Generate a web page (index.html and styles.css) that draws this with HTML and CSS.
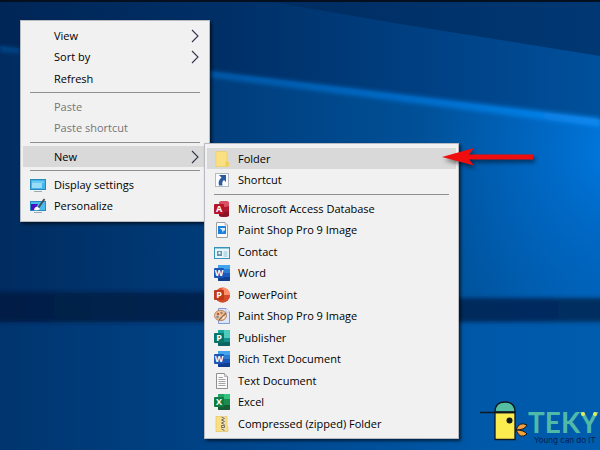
FILE: index.html
```
<!DOCTYPE html>
<html lang="en">
<head>
    <meta charset="UTF-8">
    <meta name="viewport" content="width=device-width, initial-scale=1.0">
    <title>Desktop</title>
    <link rel="stylesheet" href="styles.css">
</head>
<body>
    <!-- wallpaper -->
    <svg class="wallpaper" viewBox="0 0 600 450" preserveAspectRatio="none" aria-hidden="true">
        <defs>
            <linearGradient id="base" x1="0" x2="1" y1="0" y2="0">
                <stop offset="0" stop-color="#002c60"/>
                <stop offset="0.35" stop-color="#003c7a"/>
                <stop offset="0.75" stop-color="#00539c"/>
                <stop offset="1" stop-color="#0062b8"/>
            </linearGradient>
            <radialGradient id="glow" gradientUnits="userSpaceOnUse" cx="620" cy="150" r="200">
                <stop offset="0" stop-color="#007ae2"/>
                <stop offset="0.4" stop-color="#006ccc" stop-opacity="0.7"/>
                <stop offset="1" stop-color="#0060b8" stop-opacity="0"/>
            </radialGradient>
            <linearGradient id="sky" x1="0" x2="1" y1="0" y2="0">
                <stop offset="0" stop-color="#002656"/>
                <stop offset="0.4" stop-color="#003068"/>
                <stop offset="1" stop-color="#00509c"/>
            </linearGradient>
            <linearGradient id="corner" x1="0" x2="1" y1="0" y2="0">
                <stop offset="0" stop-color="#002c60"/>
                <stop offset="1" stop-color="#003874"/>
            </linearGradient>
            <linearGradient id="beam" x1="0" x2="1" y1="0" y2="0">
                <stop offset="0" stop-color="#0058a8"/>
                <stop offset="0.6" stop-color="#0070d0"/>
                <stop offset="1" stop-color="#0a88f0"/>
            </linearGradient>
            <linearGradient id="floor" x1="0" x2="1" y1="0" y2="0">
                <stop offset="0" stop-color="#00356e"/>
                <stop offset="0.4" stop-color="#00458a"/>
                <stop offset="0.8" stop-color="#0058a8"/>
                <stop offset="1" stop-color="#005cae"/>
            </linearGradient>
            <linearGradient id="band" x1="0" x2="1" y1="0" y2="0">
                <stop offset="0" stop-color="#001e46"/>
                <stop offset="1" stop-color="#002e62"/>
            </linearGradient>
            <filter id="soft" x="-10%" y="-50%" width="120%" height="200%"><feGaussianBlur stdDeviation="2"/></filter>
        </defs>
        <rect width="600" height="450" fill="url(#base)"/>
        <rect width="600" height="300" fill="url(#glow)"/>
        <path d="M0 0H600V120L210 71L0 46Z" fill="url(#sky)"/>
        <path d="M260 0H600V56L400 24Z" fill="url(#corner)"/>
        <path d="M0 46L20 49V53L0 51Z" fill="#004a90" filter="url(#soft)"/>
        <path d="M200 70L600 118V127L200 76Z" fill="url(#beam)" filter="url(#soft)"/>
        <rect y="322" width="600" height="128" fill="url(#floor)"/>
        <path d="M-10 292H300V298H610V322H-10Z" fill="url(#band)" filter="url(#soft)"/>
        <rect width="600" height="2" fill="#04101f"/>
    </svg>

    <!-- icons -->
    <svg class="sprite" aria-hidden="true">
        <defs>
            <symbol id="i-chevron" viewBox="0 0 8 14"><path d="M1 1L7 7L1 13" fill="none" stroke="#33334c" stroke-width="1.1"/></symbol>
            <symbol id="i-display" viewBox="0 0 16 16">
                <rect x="0.5" y="2.5" width="15" height="10" fill="#45b4ea" stroke="#2789bd"/>
                <path d="M2 6H12V11H2Z" fill="#9adcf8"/><path d="M2 4H14V6H2Z" fill="#6cc9f2"/>
                <path d="M4 14.5H12" stroke="#9caab4"/>
            </symbol>
            <symbol id="i-personalize" viewBox="0 0 16 16">
                <rect x="0.5" y="3.5" width="15" height="9" fill="#4bbbed" stroke="#2789bd"/>
                <path d="M1 6H8L5 12H1Z" fill="#4a12c4"/><path d="M4 12Q5 8 8 9L10 11Q8 13 4 12Z" fill="#fff"/>
                <path d="M8.500 9.500L14.500 1" stroke="#46515a" stroke-width="2"/>
                <path d="M4 14.500H12" stroke="#9caab4"/>
            </symbol>
            <symbol id="i-folder" viewBox="0 0 16 16">
                <path d="M2 0.500H12L13 1.500V10L14.500 11V15.500H2Z" fill="#fbe083" stroke="#ecc95c" stroke-width="0.6"/>
                <path d="M11.500 15.500V11L12.500 10L14.500 11.500V15.500Z" fill="#f0cf58"/>
            </symbol>
            <symbol id="i-shortcut" viewBox="0 0 16 16">
                <rect x="1.500" y="1.500" width="13" height="13" fill="#fbfcfd" stroke="#b3bac2"/>
                <path d="M5 3H12V10L10 8Q7.500 9.500 8.500 13.500H5Q3.500 9 7.500 5.500Z" fill="#2c5c9e"/>
            </symbol>
            <symbol id="i-access" viewBox="0 0 16 16">
                <path d="M5 1Q10 -1 15 1V15Q10 17 5 15Z" fill="#b01a30"/><path d="M5 1Q10 -1 15 1V5Q10 7 5 5Z" fill="#db5063"/><path d="M5 10Q10 12 15 10V15Q10 17 5 15Z" fill="#8c1226"/>
                <rect y="3" width="10" height="10" rx="1" fill="#b5152b"/><text class="glyph" x="5" y="11">A</text>
            </symbol>
            <symbol id="i-image" viewBox="0 0 16 16">
                <path d="M2.500 0.500H11L13.500 3V15.500H2.500Z" fill="#fafafa" stroke="#9a9fa5"/><path d="M11 0.500V3H13.500" fill="#ddd" stroke="#9a9fa5" stroke-width="0.6"/>
                <rect x="4" y="4" width="8" height="8" fill="#1b7fdb"/><path d="M5.500 6H11V8.500H9.500L9 11L8 8Z" fill="#e2f3ff"/>
            </symbol>
            <symbol id="i-contact" viewBox="0 0 16 16">
                <rect x="0.500" y="3.500" width="15" height="11" fill="#e9f7fc" stroke="#3793b9"/><path d="M1 4.500H15" stroke="#8ecbe2"/>
                <rect x="3" y="7" width="5" height="5" fill="#6394aa"/><circle cx="5.500" cy="9" r="1.200" fill="#e9f7fc"/>
                <path d="M9.500 8H13.500M9.500 10H13.500M9.500 12H13.500" stroke="#77b8d2" stroke-width="0.8"/>
            </symbol>
            <symbol id="i-word" viewBox="0 0 16 16">
                <rect x="4" width="12" height="16" rx="1" fill="#185abd"/><path d="M4 1Q4 0 5 0H15Q16 0 16 1V4H4Z" fill="#41a5ee"/><path d="M4 4H16V8H4Z" fill="#2b7cd3"/><path d="M4 12H16V15Q16 16 15 16H5Q4 16 4 15Z" fill="#103f91"/>
                <rect y="3" width="10" height="10" rx="1" fill="#1c55b4"/><text class="glyph" x="5" y="11">W</text>
            </symbol>
            <symbol id="i-powerpoint" viewBox="0 0 16 16">
                <circle cx="8.500" cy="8" r="7.500" fill="#e65a38"/><path d="M8.500 0.500A7.500 7.500 0 0 1 16 8H8.500Z" fill="#ff8f6b"/><path d="M1 8H16A7.500 7.500 0 0 1 1 8Z" fill="#d24a28"/>
                <rect y="3" width="10" height="10" rx="1" fill="#c0391b"/><text class="glyph" x="5" y="11">P</text>
            </symbol>
            <symbol id="i-palette" viewBox="0 0 16 16">
                <path d="M4.500 0.500H12L15.500 4V15.500H4.500Z" fill="#dce6fb" stroke="#7f9bd6"/><path d="M12 0.500V4H15.500" fill="#fff" stroke="#7f9bd6" stroke-width="0.6"/>
                <ellipse cx="6.500" cy="7.500" rx="6" ry="5.200" fill="#efc49c" stroke="#a8714c" stroke-width="0.8"/>
                <circle cx="4" cy="6" r="1.300" fill="#b8583c"/><circle cx="7.500" cy="5" r="1.200" fill="#a87a4c"/><circle cx="3.500" cy="9" r="1.200" fill="#6c88b8"/><circle cx="9" cy="9" r="1.500" fill="#fff"/>
                <path d="M5 12L12 5" stroke="#96603c" stroke-width="1.200"/>
            </symbol>
            <symbol id="i-publisher" viewBox="0 0 16 16">
                <rect x="4" width="12" height="16" rx="1" fill="#12908b"/><path d="M4 1Q4 0 5 0H10V8H4Z" fill="#18a79f"/><path d="M10 0H15Q16 0 16 1V8H10Z" fill="#4cccbc"/><path d="M4 12H16V15Q16 16 15 16H5Q4 16 4 15Z" fill="#0a645f"/>
                <rect y="3" width="10" height="10" rx="1" fill="#077568"/><text class="glyph" x="5" y="11">P</text>
            </symbol>
            <symbol id="i-text" viewBox="0 0 16 16">
                <path d="M2.500 0.500H10.500L13.500 3.500V15.500H2.500Z" fill="#fafafa" stroke="#8f8f8f"/><path d="M10.500 0.500V3.500H13.500" fill="#ddd" stroke="#8f8f8f" stroke-width="0.6"/>
                <path d="M4.500 4.500H9M4.500 6.500H11.500M4.500 8.500H11.500M4.500 10.500H11.500M4.500 12.500H11.500" stroke="#9b9b9b" stroke-width="0.9"/>
            </symbol>
            <symbol id="i-excel" viewBox="0 0 16 16">
                <rect x="4" width="12" height="16" rx="1" fill="#1d8a4f"/><path d="M10 0H15Q16 0 16 1V5H10Z" fill="#33c481"/><path d="M4 1Q4 0 5 0H10V5H4Z" fill="#21a366"/><path d="M4 11H16V15Q16 16 15 16H5Q4 16 4 15Z" fill="#185c37"/>
                <rect y="3" width="10" height="10" rx="1" fill="#107c41"/><text class="glyph" x="5" y="11">X</text>
            </symbol>
            <symbol id="i-zip" viewBox="0 0 16 16">
                <path d="M2 0.500H13V10L14 11V15.500H2Z" fill="#fbe083" stroke="#e0bf58" stroke-width="0.6"/>
                <path d="M9 0.500V15" stroke="#e9dfc0" stroke-width="4"/>
                <path d="M7.500 1L10.500 2.500L7.500 4L10.500 5.500L7.500 7L10.500 8.500M7.500 9.500H10.500V11.500H7.500ZM7.500 13L10.500 14.500" fill="none" stroke="#77705a"/>
            </symbol>
        </defs>
    </svg>

    <nav class="menu context-menu" aria-label="Desktop">
        <ul class="group">
            <li><button class="item"><span class="label">View</span><svg class="chevron"><use href="#i-chevron"/></svg></button></li>
            <li><button class="item"><span class="label">Sort by</span><svg class="chevron"><use href="#i-chevron"/></svg></button></li>
            <li><button class="item"><span class="label">Refresh</span></button></li>
        </ul>
        <hr>
        <ul class="group">
            <li><button class="item" disabled><span class="label">Paste</span></button></li>
            <li><button class="item" disabled><span class="label">Paste shortcut</span></button></li>
        </ul>
        <hr>
        <ul class="group">
            <li><button class="item active" aria-haspopup="true" aria-expanded="true"><span class="label">New</span><svg class="chevron"><use href="#i-chevron"/></svg></button></li>
        </ul>
        <hr>
        <ul class="group">
            <li><button class="item"><svg class="icon"><use href="#i-display"/></svg><span class="label">Display settings</span></button></li>
            <li><button class="item"><svg class="icon"><use href="#i-personalize"/></svg><span class="label">Personalize</span></button></li>
        </ul>
    </nav>

    <nav class="menu submenu" aria-label="New">
        <ul class="group">
            <li><button class="item active"><svg class="icon"><use href="#i-folder"/></svg><span class="label">Folder</span></button></li>
            <li><button class="item"><svg class="icon"><use href="#i-shortcut"/></svg><span class="label">Shortcut</span></button></li>
        </ul>
        <hr>
        <ul class="group">
            <li><button class="item"><svg class="icon"><use href="#i-access"/></svg><span class="label">Microsoft Access Database</span></button></li>
            <li><button class="item"><svg class="icon"><use href="#i-image"/></svg><span class="label">Paint Shop Pro 9 Image</span></button></li>
            <li><button class="item"><svg class="icon"><use href="#i-contact"/></svg><span class="label">Contact</span></button></li>
            <li><button class="item"><svg class="icon"><use href="#i-word"/></svg><span class="label">Word</span></button></li>
            <li><button class="item"><svg class="icon"><use href="#i-powerpoint"/></svg><span class="label">PowerPoint</span></button></li>
            <li><button class="item"><svg class="icon"><use href="#i-palette"/></svg><span class="label">Paint Shop Pro 9 Image</span></button></li>
            <li><button class="item"><svg class="icon"><use href="#i-publisher"/></svg><span class="label">Publisher</span></button></li>
            <li><button class="item"><svg class="icon"><use href="#i-word"/></svg><span class="label">Rich Text Document</span></button></li>
            <li><button class="item"><svg class="icon"><use href="#i-text"/></svg><span class="label">Text Document</span></button></li>
            <li><button class="item"><svg class="icon"><use href="#i-excel"/></svg><span class="label">Excel</span></button></li>
            <li><button class="item"><svg class="icon"><use href="#i-zip"/></svg><span class="label">Compressed (zipped) Folder</span></button></li>
        </ul>
    </nav>

    <svg class="arrow" viewBox="0 0 92 20" aria-hidden="true">
        <path d="M0 10L32 1L27 7.500H91V12.500H27L32 18.500Z" fill="#f00d0d"/>
    </svg>

    <div class="brand">
        <svg class="bird" viewBox="0 0 48 40" aria-hidden="true">
            <path d="M15 11Q15 1 25 1Q35 1 35 11Z" fill="#55bfa2" stroke="#101820" stroke-width="1.300"/>
            <path d="M15 11.500H35V38.500H15Z" fill="#fbec50" stroke="#101820" stroke-width="1.300"/>
            <path d="M0 11.500H35" stroke="#101820" stroke-width="1.500"/>
            <circle cx="29.500" cy="19.500" r="3" fill="#101820"/>
            <path d="M36 29Q39 20 47 24Q45 29 36 29Z" fill="#f5a03c" stroke="#101820"/>
            <path d="M36 29Q44 29 47 33Q40 39 36 29Z" fill="#f5a03c" stroke="#101820"/>
        </svg>
        <div class="wordmark">
            <strong class="name">TEKY</strong>
            <span class="tagline">Young can do IT</span>
        </div>
    </div>
</body>
</html>
```
FILE: styles.css
```
* {
    box-sizing: border-box;
}
body {
    margin: 0;
    min-height: 100vh;
    position: relative;
    overflow: hidden;
    background-color: #00458a;
    font-family: "Open Sans", "Noto Sans", sans-serif;
    font-size: 11px;
}
.wallpaper {
    position: absolute;
    width: 100%;
    height: 100%;
}
.sprite {
    position: absolute;
    width: 0;
    height: 0;
}
.glyph {
    font: bold 9px "Open Sans", sans-serif;
    fill: white;
    text-anchor: middle;
}

/* menus */
.menu {
    position: absolute;
    padding: 4px 2px;
    background-color: #f1f1f1;
    border: 1px solid #b8bcc2;
    box-shadow: 2px 2px 3px rgba(0, 0, 0, 0.6);
}
.context-menu {
    left: 20px;
    top: 20px;
    width: 190px;
}
.submenu {
    left: 204px;
    top: 143px;
    width: 255px;
}
.group {
    display: grid;
    grid-auto-rows: 21px 22px;
    margin: 0;
    padding: 0;
    list-style: none;
}
.item {
    display: grid;
    grid-template-columns: 16px 1fr 8px;
    column-gap: 8px;
    align-items: center;
    width: 100%;
    height: 100%;
    padding: 0 8px 0 7px;
    border: none;
    background: none;
    color: #000;
    font: inherit;
    line-height: 16px;
    text-align: left;
}
.item:disabled {
    color: #757575;
}
.item.active {
    background-color: #d9d9d9;
}
.label {
    grid-column: 2;
    white-space: nowrap;
}
.icon {
    width: 16px;
    height: 16px;
}
.chevron {
    width: 8px;
    height: 14px;
}
hr {
    height: 1px;
    margin: 3px 7px;
    border: none;
    background-color: #8f8f8f;
}

.arrow {
    position: absolute;
    left: 442px;
    top: 147px;
    width: 92px;
    height: 20px;
    overflow: visible;
    filter: drop-shadow(2px 3px 2px rgba(0, 0, 0, 0.5));
}

/* logo */
.brand {
    position: absolute;
    right: 0;
    bottom: 5px;
    display: flex;
    align-items: flex-end;
}
.bird {
    width: 48px;
    height: 40px;
    margin-bottom: 4px;
}
.wordmark {
    display: flex;
    flex-direction: column;
    width: 72px;
}
.name {
    position: relative;
    color: #50b9a8;
    font: bold 28px/26px "Lato", sans-serif;
}
/* the two dots on the arms of the Y */
.name::before,
.name::after {
    content: "";
    position: absolute;
    top: 3px;
    right: 15px;
    width: 4px;
    height: 4px;
    border-radius: 50%;
    background-color: #e9ec5a;
}
.name::after {
    right: 3px;
}
.tagline {
    padding-left: 6px;
    color: #06204a;
    font: 8px/10px "Inter", sans-serif;
    white-space: nowrap;
}
```
